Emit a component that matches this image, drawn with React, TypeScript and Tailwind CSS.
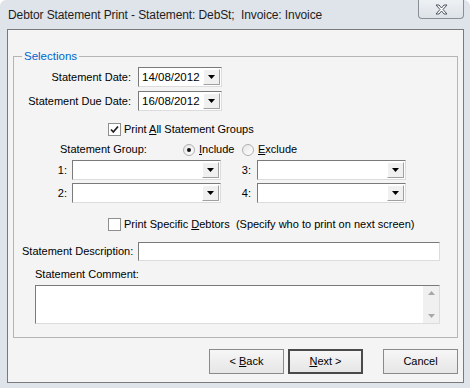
import React from "react"

const Arrow = () => (
  <svg width="7" height="4" viewBox="0 0 7 4"><path d="M0 0h7L3.5 4z" fill="#000" /></svg>
)

const Combo = ({ value = "", w }: { value?: string; w: string }) => (
  <div className={`${w} h-[20px] flex bg-white border border-t-[#7a7a7a] border-l-[#7a7a7a] border-r-[#dcdcdc] border-b-[#dcdcdc]`}>
    <div className="flex-1 pl-[3px] leading-[18px] text-[11.5px]">{value}</div>
    <div className="w-[17px] m-[1px] flex items-center justify-center bg-[#f0f0f0] border border-t-white border-l-white border-r-[#a0a0a0] border-b-[#a0a0a0]">
      <Arrow />
    </div>
  </div>
)

const Check = ({ checked }: { checked?: boolean }) => (
  <div className="w-[13px] h-[13px] border border-[#8e8f8f] bg-white flex items-center justify-center">
    {checked && (
      <svg width="9" height="9" viewBox="0 0 9 9"><path d="M1 4.5l2.3 2.5L8 1.5" stroke="#222" strokeWidth="1.8" fill="none" /></svg>
    )}
  </div>
)

const Radio = ({ on }: { on?: boolean }) => (
  <div className="w-[12px] h-[12px] rounded-full border border-[#b0b0b0] bg-gradient-to-br from-[#e6e6e6] to-white flex items-center justify-center">
    {on && <div className="w-[4px] h-[4px] rounded-full bg-[#111]" />}
  </div>
)

const Btn = ({ children, def }: { children: React.ReactNode; def?: boolean }) => (
  <button className={`w-[75px] h-[25px] flex items-center justify-center bg-gradient-to-b from-[#f6f6f6] to-[#e6e6e6] ${def ? "border-2 border-[#4a4a4a]" : "border border-[#8a8a8a]"}`}>
    <span>{children}</span>
  </button>
)

export default function App() {
  return (
    <div className="w-[470px] h-[388px] bg-[#dfe4ea] flex flex-col font-['Liberation_Sans',Arial,sans-serif] text-[11px] text-black rounded-t-[6px] whitespace-nowrap">
      <div className="h-[29px] flex items-start">
        <div className="pl-[8px] pt-[7px] text-[12px] text-[#1e1e1e] leading-[16px] tracking-[-0.1px]">Debtor Statement Print - Statement: DebSt;&nbsp; Invoice: Invoice</div>
        <div className="ml-auto mr-[6px] w-[46px] h-[19px] rounded-b-[4px] border border-t-0 border-[#8a8f96] bg-gradient-to-b from-[#eef1f4] to-[#dde2e8] flex items-center justify-center">
          <svg width="13" height="11" viewBox="0 0 13 11">
            <path d="M1 1h3l2.5 3L9 1h3L8 5.5 12 10H9L6.5 7 4 10H1l4-4.5z" fill="#fff" stroke="#4d5460" strokeWidth="1" />
          </svg>
        </div>
      </div>
      <div className="ml-[7px] mr-[6px] mb-[5px] flex-1 border border-[#7a7a7a] bg-[#f4f4f4] flex flex-col">
        <fieldset className="mt-[19px] ml-[5px] mr-[5px] h-[289px] border border-[#b5b5b5]">
          <legend className="ml-[8px] px-[2px] text-[11.5px] text-[#0066cc] leading-[14px]">Selections</legend>
          <div className="flex flex-col">
            <div className="mt-[4px] h-[20px] flex items-center">
              <div className="w-[118px] text-right pr-[1px]">Statement Date:</div>
              <div className="ml-[6px]"><Combo w="w-[84px]" value="14/08/2012" /></div>
            </div>
            <div className="mt-[4px] h-[20px] flex items-center">
              <div className="w-[118px] text-right pr-[1px]">Statement Due Date:</div>
              <div className="ml-[6px]"><Combo w="w-[84px]" value="16/08/2012" /></div>
            </div>
            <div className="mt-[12px] h-[13px] ml-[94px] flex items-center gap-[3px]">
              <Check checked />
              <span>Print <u>A</u>ll Statement Groups</span>
            </div>
            <div className="mt-[7px] h-[13px] flex items-center">
              <div className="ml-[46px] w-[123px]">Statement Group:</div>
              <Radio on />
              <span className="ml-[4px] w-[43px]"><u>I</u>nclude</span>
              <Radio />
              <span className="ml-[4px]"><u>E</u>xclude</span>
            </div>
            <div className="mt-[4px] h-[20px] flex items-center">
              <div className="w-[53px] text-right">1:</div>
              <div className="ml-[5px]"><Combo w="w-[149px]" /></div>
              <div className="w-[30px] text-right">3:</div>
              <div className="ml-[6px]"><Combo w="w-[149px]" /></div>
            </div>
            <div className="mt-[3px] h-[20px] flex items-center">
              <div className="w-[53px] text-right">2:</div>
              <div className="ml-[5px]"><Combo w="w-[149px]" /></div>
              <div className="w-[30px] text-right">4:</div>
              <div className="ml-[6px]"><Combo w="w-[149px]" /></div>
            </div>
            <div className="mt-[15px] h-[13px] ml-[94px] flex items-center gap-[3px]">
              <Check />
              <span>Print Specific <u>D</u>ebtors&nbsp; (Specify who to print on next screen)</span>
            </div>
            <div className="mt-[11px] h-[19px] flex items-center">
              <div className="ml-[8px] w-[116px]">Statement Description:</div>
              <div className="h-[19px] w-[302px] bg-white border border-t-[#7a7a7a] border-l-[#7a7a7a] border-r-[#dcdcdc] border-b-[#dcdcdc]" />
            </div>
            <div className="mt-[7px] h-[13px] ml-[21px] flex items-center">Statement Comment:</div>
            <div className="mt-[4px] ml-[21px] w-[405px] h-[39px] bg-white flex border border-t-[#7a7a7a] border-l-[#7a7a7a] border-r-[#dcdcdc] border-b-[#dcdcdc]">
              <div className="flex-1" />
              <div className="w-[16px] bg-[#f0f0f0] flex flex-col items-center justify-between py-[5px]">
                <svg width="7" height="4" viewBox="0 0 7 4"><path d="M0 4h7L3.5 0z" fill="#a8a8a8" /></svg>
                <svg width="7" height="4" viewBox="0 0 7 4"><path d="M0 0h7L3.5 4z" fill="#a8a8a8" /></svg>
              </div>
            </div>
          </div>
        </fieldset>
        <div className="mt-[11px] mr-[5px] flex justify-end">
          <Btn>&lt; <u>B</u>ack</Btn>
          <div className="ml-[4px]"><Btn def><u>N</u>ext &gt;</Btn></div>
          <div className="ml-[20px]"><Btn>Cancel</Btn></div>
        </div>
      </div>
    </div>
  )
}
